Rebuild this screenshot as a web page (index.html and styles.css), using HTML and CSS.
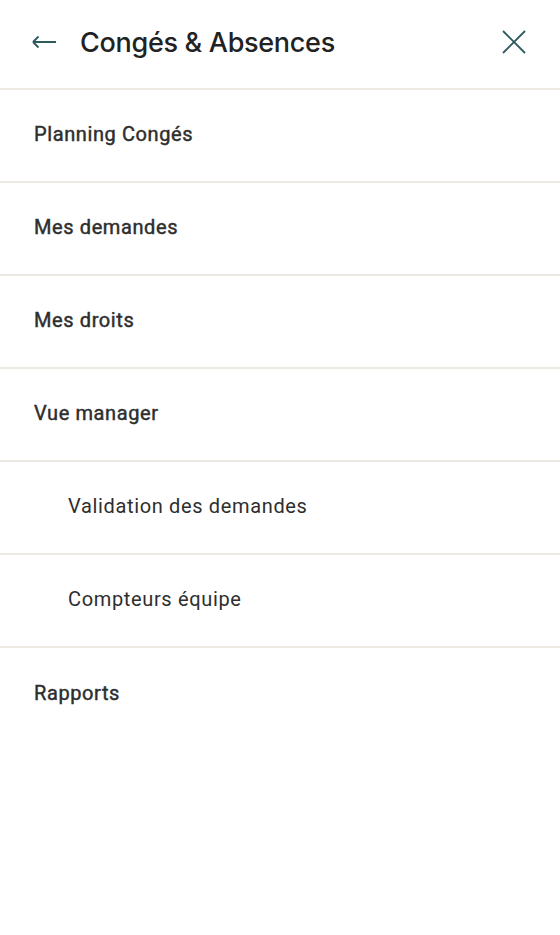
FILE: index.html
```html
<html>
<head>
	<meta charset="UTF-8">
	<link rel="stylesheet" href="styles.css">
</head>
<body>
	<div class="panel">
		<div class="panel-header">
			<button class="icon-btn back" aria-label="Retour">
				<svg width="26" height="14" viewBox="0 0 26 14"><path d="M1 7H24M1 7L6.5 1.5M1 7L6.5 12.5" fill="none" stroke="#2d5a5e" stroke-width="1.8"/></svg>
			</button>
			<h1 class="panel-title">Congés &amp; Absences</h1>
			<button class="icon-btn close" aria-label="Fermer">
				<svg width="24" height="24" viewBox="0 0 24 24"><path d="M1 1L23 23M23 1L1 23" fill="none" stroke="#2d5a5e" stroke-width="1.8"/></svg>
			</button>
		</div>
		<ul class="menu">
			<li class="menu-item">Planning Congés</li>
			<li class="menu-item">Mes demandes</li>
			<li class="menu-item">Mes droits</li>
			<li class="menu-item">Vue manager</li>
			<li class="menu-item sub">Validation des demandes</li>
			<li class="menu-item sub">Compteurs équipe</li>
			<li class="menu-item last">Rapports</li>
		</ul>
	</div>
</body>
</html>
```
FILE: styles.css
```css
body {
	margin: 0;
	background: #fff;
	font-family: Roboto, "Liberation Sans", sans-serif;
	color: #2b2b2b;
}
.panel-header {
	display: flex;
	align-items: center;
	height: 90px;
	padding: 0 34px 0 32px;
	border-bottom: 2px solid #ebe9e1;
	box-sizing: border-box;
}
.icon-btn {
	background: none;
	border: 0;
	padding: 0;
	display: flex;
	cursor: pointer;
}
.back {
	margin-top: -4px;
}
.close {
	margin-left: auto;
	margin-top: -4px;
}
.panel-title {
	margin: -4px 0 0 22px;
	font-family: Inter, "Open Sans", sans-serif;
	font-weight: 500;
	font-size: 27px;
	letter-spacing: -0.3px;
	color: #222;
}
.menu {
	list-style: none;
	margin: 0;
	padding: 0;
}
.menu-item {
	display: flex;
	align-items: center;
	height: 93px;
	box-sizing: border-box;
	padding: 0 34px 4px;
	border-bottom: 2px solid #ebe9e1;
	font-size: 20px;
	font-weight: 400;
	-webkit-text-stroke: 0.45px #2e2e2e;
	letter-spacing: 0.6px;
	color: #2e2e2e;
}
.menu-item.sub {
	padding-left: 68px;
	-webkit-text-stroke: 0;
	letter-spacing: 0.65px;
}
.menu-item.last {
	border-bottom: 0;
}
```
